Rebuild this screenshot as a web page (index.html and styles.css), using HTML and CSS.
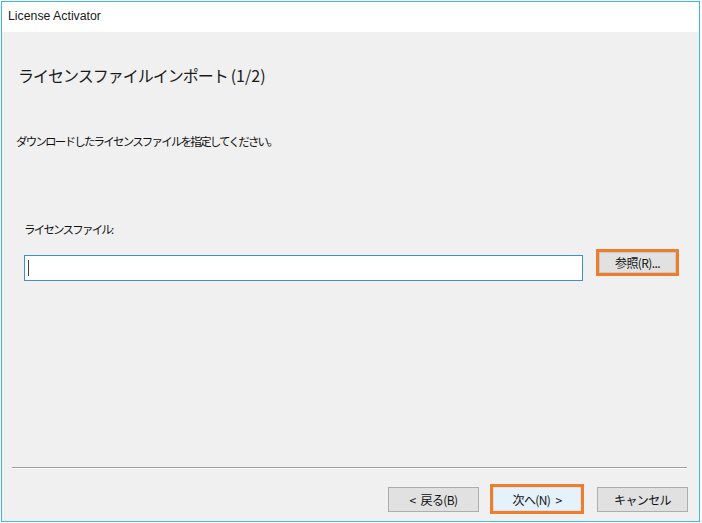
FILE: index.html
```html
<!DOCTYPE html>
<html lang="ja">
<head>
<meta charset="utf-8">
<title>License Activator</title>
<link rel="stylesheet" href="styles.css">
</head>
<body>
<div class="window">
  <div class="titlebar">License Activator</div>
  <div class="content">
    <h1 class="heading">ライセンスファイルインポート<span class="paren">(1/2)</span></h1>
    <p class="desc">ダウンロードしたライセンスファイルを指定してください。</p>
    <p class="label">ライセンスファイル:</p>
    <div class="file-row">
      <div class="input"><span class="caret"></span></div>
      <div class="hl hl-browse"><div class="btn btn-browse">参照(R)...</div></div>
    </div>
    <div class="spacer"></div>
    <div class="separator"></div>
    <div class="buttons">
      <div class="btn btn-nav">&lt; 戻る(B)</div>
      <div class="hl hl-next"><div class="btn btn-next">次へ(N) &gt;</div></div>
      <div class="btn btn-nav btn-cancel">キャンセル</div>
    </div>
  </div>
</div>
</body>
</html>
```

FILE: styles.css
```css
html, body {
  margin: 0;
  padding: 0;
  background: #ffffff;
}
body {
  font-family: "Noto Sans CJK JP", "Noto Sans", sans-serif;
  color: #000;
}
.window {
  margin: 1px 0 0 1px;
  width: 699px;
  height: 521px;
  box-sizing: border-box;
  border: 1px solid #3cb7ec;
  background: #f0f0f0;
  display: flex;
  flex-direction: column;
}
.titlebar {
  height: 30px;
  flex: none;
  background: #ffffff;
  padding-left: 6px;
  font-family: "Liberation Sans", Arial, sans-serif;
  font-size: 12.3px;
  line-height: 29px;
  color: #1a1a1a;
}
.content {
  flex: 1;
  display: flex;
  flex-direction: column;
  padding: 0 12px 7px 10px;
}
.heading {
  margin: 33px 0 0 6px;
  font-weight: normal;
  font-size: 16px;
  line-height: 20px;
  letter-spacing: -1px;
  color: #1a1a1a;
}
.paren {
  margin-left: 3px;
  letter-spacing: 0;
}
.desc {
  margin: 49px 0 0 4px;
  font-size: 11.5px;
  line-height: 14px;
  letter-spacing: -1.8px;
  color: #111;
}
.label {
  margin: 74px 0 0 12px;
  font-size: 11.5px;
  line-height: 14px;
  letter-spacing: -1.8px;
  color: #111;
}
.file-row {
  margin-top: 13px;
  margin-left: 12px;
  display: flex;
  align-items: flex-start;
}
.input {
  margin-top: 6px;
  width: 559px;
  height: 26px;
  box-sizing: border-box;
  border: 1px solid #3d8fdc;
  background: #ffffff;
  display: flex;
  align-items: center;
  padding-left: 3px;
}
.caret {
  display: block;
  width: 1px;
  height: 16px;
  background: #444;
}
.hl {
  box-sizing: border-box;
  border: 3px solid #f07d2a;
  display: flex;
}
.hl-browse {
  margin-left: 13px;
  width: 83px;
  height: 27px;
}
.btn {
  box-sizing: border-box;
  border: 1px solid #adadad;
  background: #e1e1e1;
  display: flex;
  align-items: center;
  justify-content: center;
  font-size: 12px;
  letter-spacing: -0.6px;
  word-spacing: 3px;
  color: #111;
}
.btn-browse {
  flex: 1;
  border-color: #c9c9c9;
}
.spacer {
  flex: 1;
}
.separator {
  height: 1px;
  background: #a0a0a0;
  border-bottom: 1px solid #ffffff;
}
.buttons {
  margin-top: 15px;
  margin-right: -1px;
  display: flex;
  justify-content: flex-end;
  align-items: center;
  height: 30px;
}
.btn-nav {
  width: 91px;
  height: 25px;
}
.hl-next {
  margin-left: 11px;
  width: 94px;
  height: 30px;
}
.btn-next {
  flex: 1;
  background: #e5f1fb;
  border-color: #cfe3f5;
}
.btn-cancel {
  margin-left: 13px;
}
```
